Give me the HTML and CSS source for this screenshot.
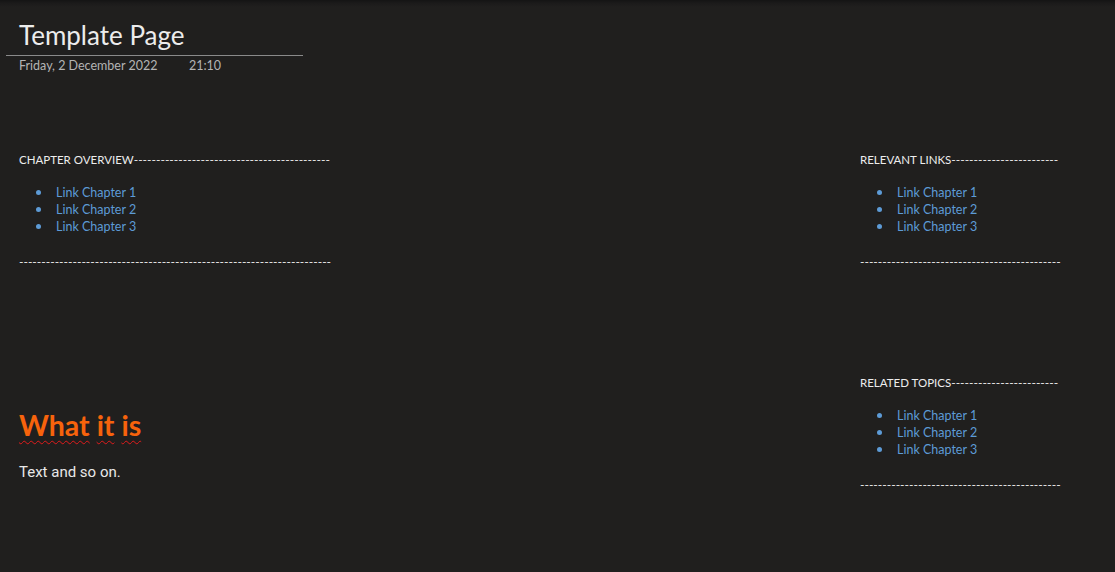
FILE: index.html
```html
<!DOCTYPE html>
<html lang="en">
<head>
<meta charset="utf-8">
<title>Template Page</title>
<link rel="stylesheet" href="styles.css">
</head>
<body>
<div class="page">
  <main class="main-col">
    <header class="page-header">
      <h1 class="page-title">Template Page</h1>
    </header>
    <div class="page-meta"><span class="meta-date">Friday, 2 December 2022</span><span class="meta-time">21:10</span></div>

    <section class="box box-left">
      <div class="box-head"><span class="box-label">CHAPTER OVERVIEW</span><span class="dashes">--------------------------------------------</span></div>
      <ul class="links">
        <li><a href="#">Link Chapter 1</a></li>
        <li><a href="#">Link Chapter 2</a></li>
        <li><a href="#">Link Chapter 3</a></li>
      </ul>
      <div class="dash-rule"><span class="dashes">----------------------------------------------------------------------</span></div>
    </section>

    <h2 class="section-title"><span class="typo">What</span> <span class="typo">it</span> <span class="typo">is</span></h2>
    <p class="body-text">Text and so on.</p>
  </main>

  <aside class="side-col">
    <section class="box box-right">
      <div class="box-head"><span class="box-label">RELEVANT LINKS</span><span class="dashes">------------------------</span></div>
      <ul class="links">
        <li><a href="#">Link Chapter 1</a></li>
        <li><a href="#">Link Chapter 2</a></li>
        <li><a href="#">Link Chapter 3</a></li>
      </ul>
      <div class="dash-rule"><span class="dashes">---------------------------------------------</span></div>
    </section>

    <section class="box box-right box-second">
      <div class="box-head"><span class="box-label">RELATED TOPICS</span><span class="dashes">------------------------</span></div>
      <ul class="links">
        <li><a href="#">Link Chapter 1</a></li>
        <li><a href="#">Link Chapter 2</a></li>
        <li><a href="#">Link Chapter 3</a></li>
      </ul>
      <div class="dash-rule"><span class="dashes">---------------------------------------------</span></div>
    </section>
  </aside>
</div>
</body>
</html>
```

FILE: styles.css
```css
html, body {
  margin: 0;
  padding: 0;
  height: 100%;
}

body {
  background: #201f1e linear-gradient(to bottom, #141414 0px, #1b1a1a 3px, #201f1e 7px) no-repeat;
  font-family: "Lato", "Noto Sans", sans-serif;
  color: #e6e6e6;
  overflow: hidden;
}

.page {
  display: flex;
  min-height: 100%;
}

.main-col {
  flex: 1;
  padding-left: 19px;
}

.side-col {
  width: 255px;
  padding-top: 153px;
}

.page-header {
  margin-left: -13px;
  width: 297px;
  padding: 20px 0 5px 13px;
  box-sizing: border-box;
  border-bottom: 1px solid #8a8a8a;
}

.page-title {
  margin: 0;
  font-size: 26px;
  line-height: 30px;
  font-weight: 400;
  color: #ececec;
}

.page-meta {
  margin-top: 3px;
  font-size: 12.5px;
  line-height: 14px;
  color: #b4b4b4;
  display: flex;
}

.meta-date {
  width: 170px;
}

.box {
  font-size: 12px;
}

.box-left {
  margin-top: 80px;
}

.box-second {
  margin-top: 107px;
}

.box-head,
.dash-rule {
  display: flex;
  line-height: 14px;
  white-space: nowrap;
  color: #ededed;
}

.box-label {
  font-size: 11.5px;
}

.links {
  list-style: none;
  margin: 17px 0 0;
  padding: 0;
}

.links li {
  display: flex;
  align-items: center;
  height: 17px;
  line-height: 17px;
  font-size: 12.5px;
}

.links li::before {
  content: "";
  width: 5px;
  height: 5px;
  border-radius: 50%;
  background: #5d9bd6;
  margin-left: 17px;
  margin-right: 15px;
  flex: none;
}

.links a {
  color: #5d9bd6;
  text-decoration: none;
}

.dash-rule {
  margin-top: 20px;
}

.section-title {
  margin: 139px 0 0;
  font-size: 28.5px;
  line-height: 35px;
  font-weight: 700;
  color: #f7630c;
}

.typo {
  text-decoration: underline wavy #e01b1b;
  text-decoration-thickness: 1px;
  text-underline-offset: 4px;
  text-decoration-skip-ink: none;
}

.body-text {
  margin: 19px 0 0;
  font-family: "Roboto", "Liberation Sans", sans-serif;
  font-size: 15px;
  line-height: 20px;
  color: #e8e8e8;
}
```
